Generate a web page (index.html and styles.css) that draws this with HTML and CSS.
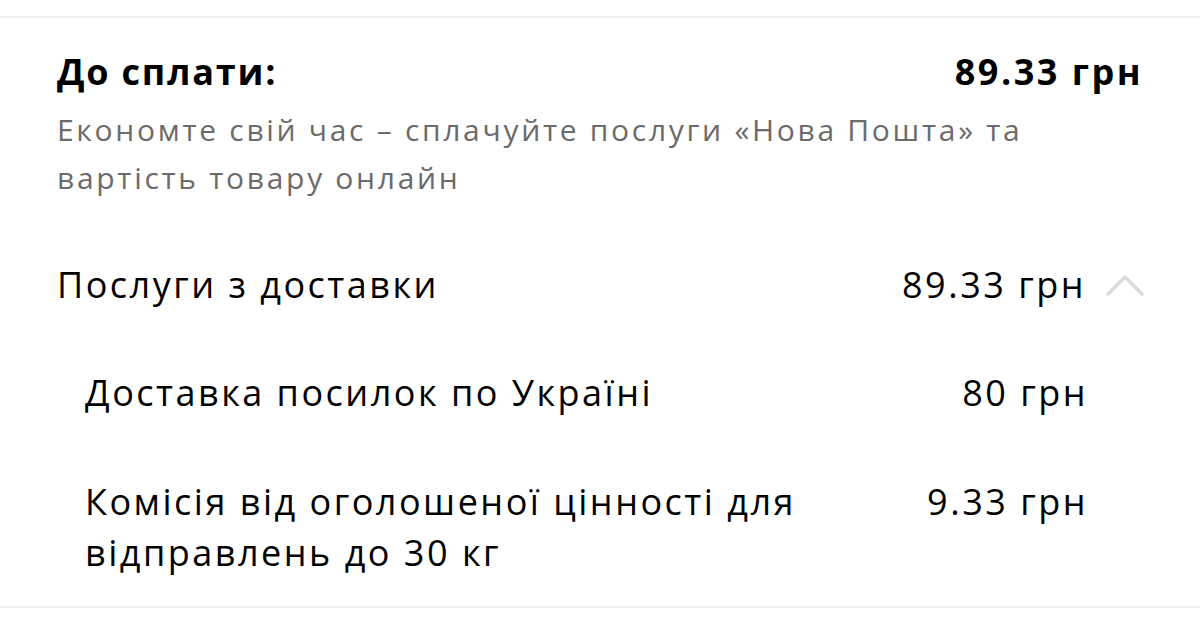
FILE: index.html
```html
<!DOCTYPE html>
<html lang="uk">
<head>
<meta charset="utf-8">
<link rel="stylesheet" href="styles.css">
</head>
<body>
<section class="panel">
  <div class="total">
    <div class="total-row">
      <span class="total-label">До сплати:</span>
      <span class="total-sum">89.33 грн</span>
    </div>
    <p class="hint">Економте свій час – сплачуйте послуги «Нова Пошта» та вартість товару онлайн</p>
  </div>
  <div class="group">
    <div class="group-head">
      <span class="group-title">Послуги з доставки</span>
      <span class="group-sum">89.33 грн</span>
      <svg class="chevron" viewBox="0 0 40 24" width="40" height="24"><path d="M3 21 L20 4 L37 21" fill="none" stroke="#dadada" stroke-width="3.5" stroke-linecap="round" stroke-linejoin="round"/></svg>
    </div>
    <div class="item">
      <span class="item-name">Доставка посилок по Україні</span>
      <span class="item-sum">80 грн</span>
    </div>
    <div class="item">
      <span class="item-name">Комісія від оголошеної цінності для відправлень до 30 кг</span>
      <span class="item-sum">9.33 грн</span>
    </div>
  </div>
</section>
</body>
</html>
```
FILE: styles.css
```css
* { box-sizing: border-box; }
html, body { margin: 0; padding: 0; background: #fff; }
body {
  font-family: "Open Sans", "Noto Sans", sans-serif;
  color: #000;
  padding-top: 16px;
}
.panel {
  border-top: 2px solid #edf0f4;
  border-bottom: 2px solid #edf0f4;
  padding: 32px 59px 28px 57px;
}
.total-row {
  display: flex;
  justify-content: space-between;
  align-items: baseline;
  font-size: 36px;
  font-weight: 700;
  line-height: 44px;
  letter-spacing: 1.8px;
}
.total-label { letter-spacing: 1.8px; }
.total-sum { margin-right: -2px; letter-spacing: 2.5px; }
.hint {
  margin: 12px 0 0;
  font-size: 30px;
  line-height: 48px;
  letter-spacing: 2.7px;
  color: #6b6b6b;
  max-width: 1010px;
}
.group { margin-top: 59px; }
.group-head {
  display: flex;
  align-items: center;
  font-size: 36px;
  line-height: 48px;
  letter-spacing: 2.5px;
}
.group-title { flex: 1; }
.group-sum { margin-right: 19px; }
.chevron { display: block; margin-right: -4px; }
.item {
  display: flex;
  align-items: flex-start;
  justify-content: space-between;
  padding-left: 28px;
  padding-right: 53px;
  font-size: 36px;
  line-height: 51px;
  letter-spacing: 2.5px;
  margin-top: 58px;
}
.item-name { max-width: 740px; }
.item-sum { white-space: nowrap; }
```
